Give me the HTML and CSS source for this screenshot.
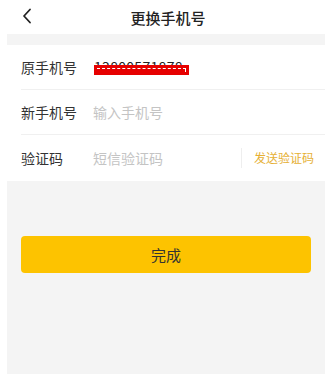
FILE: index.html
```html
<!DOCTYPE html>
<html lang="zh-CN">
<head>
  <meta charset="UTF-8" />
  <title>更换手机号</title>
  <meta name="viewport" content="width=device-width, initial-scale=1.0" />
  <link rel="stylesheet" href="styles.css">
</head>
<body>
  <div class="page">
    <header class="topbar">
      <span class="back">
        <svg width="10" height="16" viewBox="0 0 10 16"><path d="M8 1.5 L2 8 L8 14.5" fill="none" stroke="#222" stroke-width="1.8" stroke-linecap="round" stroke-linejoin="round"/></svg>
      </span>
      <span class="title">更换手机号</span>
    </header>

    <div class="main">
      <!-- 表单 -->
      <div class="form">
        <div class="row">
          <span class="label">原手机号</span>
          <span class="phone">13800571878</span>
        </div>
        <div class="row">
          <span class="label">新手机号</span>
          <input class="field" placeholder="输入手机号" />
        </div>
        <div class="row">
          <span class="label">验证码</span>
          <input class="field" placeholder="短信验证码" />
          <span class="send">发送验证码</span>
        </div>
      </div>

      <button class="submit">完成</button>
    </div>
  </div>
</body>
</html>
```

FILE: styles.css
```css
body { margin:0; font-family:'Noto Sans CJK SC','Noto Sans',sans-serif; background:#fff; color:#333; }
.page { margin:0 3px 0 7px; height:374px; display:flex; flex-direction:column; }

/* 顶部栏 */
.topbar { height:34px; flex:none; display:flex; align-items:center; justify-content:center; position:relative; background:#fff; }
.back { position:absolute; left:15px; top:8px; display:flex; }
.title { font-size:15px; font-weight:500; color:#222; margin-left:4px; }

.main { flex:1; background:#f4f4f4; padding-top:11px; }

/* 表单 */
.form { background:#fff; padding-left:14px; }
.row { height:45px; display:flex; align-items:center; border-bottom:1px solid #f0f0f0; box-sizing:border-box; }
.row:last-child { border-bottom:none; height:46px; }
.label { width:72px; flex:none; font-size:14px; color:#333; }
.field { flex:1; min-width:0; border:none; outline:none; padding:0; font-size:14px; font-family:inherit; background:none; }
.field::placeholder { color:#c4c4c4; }

/* 打码的号码 */
.phone { position:relative; font-size:14px; color:#222; margin-left:1px; letter-spacing:0.3px; }
.phone::after { content:""; position:absolute; left:0; right:-6px; top:8px; height:10px; background:#e60000; }
.phone::before { content:""; position:absolute; left:3px; right:-3px; top:11px; height:3px; border-top:1px dashed #fff; border-right:1px solid #fff; z-index:1; }

.send { flex:none; font-size:12px; color:#e6b034; border-left:1px solid #eee; padding:2px 11px 2px 12px; line-height:16px; }

.submit { display:block; width:290px; height:37px; margin:55px 0 0 14px; border:none; border-radius:4px; background:#fdc300; font-size:15px; font-family:inherit; color:#333; }
```
